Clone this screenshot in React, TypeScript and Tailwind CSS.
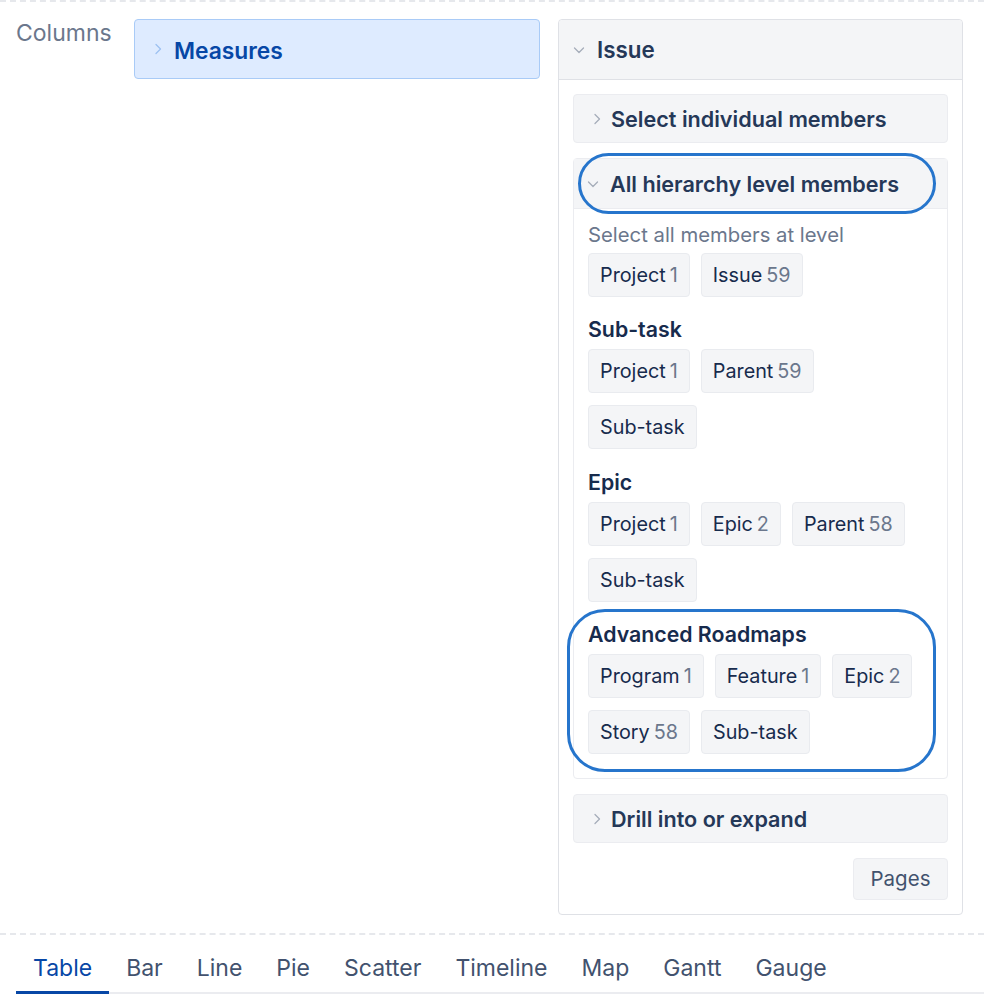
import React from "react";

const Chevron = ({ dir, className }: { dir: "down" | "right"; className?: string }) => (
  <svg width="14" height="14" viewBox="0 0 14 14" className={className}>
    <path
      d={dir === "down" ? "M2.5 5 L7 9.5 L11.5 5" : "M5 2.5 L9.5 7 L5 11.5"}
      fill="none"
      stroke="currentColor"
      strokeWidth="1.3"
      strokeLinecap="round"
      strokeLinejoin="round"
    />
  </svg>
);

const Chip = ({ label, count }: { label: string; count?: number }) => (
  <div className="h-[44px] flex items-center px-[11px] bg-[#f4f5f7] border border-[#e9ebef] rounded-[4px] text-[19.8px] text-[#172b4d] leading-6">
    <span>{label}</span>
    {count !== undefined && <span className="ml-[4px] text-[#6b778c]">{count}</span>}
  </div>
);

const Heading = ({ children }: { children: React.ReactNode }) => (
  <div className="text-[21.3px] font-semibold text-[#172b4d] leading-6">{children}</div>
);

export default function App() {
  const tabs = ["Table", "Bar", "Line", "Pie", "Scatter", "Timeline", "Map", "Gantt", "Gauge"];
  return (
    <div className="min-h-screen bg-white font-['Inter',sans-serif] antialiased">
      <div className="border-t-2 border-dashed border-[#e6e8ec]" />
      <div className="flex pl-4 pt-[17px] items-start">
        <div className="w-[118px] text-[23px] text-[#6b778c] leading-6 pt-[2px]">Columns</div>
        <div className="w-[406px] h-[60px] flex items-center pl-[16px] bg-[#deebff] border border-[#a9cbf7] rounded-[4px]">
          <Chevron dir="right" className="text-[#9dc1f2]" />
          <span className="ml-[9px] mt-[3px] text-[22.8px] font-semibold text-[#0747a6] leading-6">Measures</span>
        </div>
        <div className="ml-[18px] w-[405px] border border-[#dfe1e6] rounded-[4px]">
          <div className="h-[60px] flex items-center pl-[13px] bg-[#f4f5f7] border-b border-[#dfe1e6] rounded-t-[4px]">
            <Chevron dir="down" className="text-[#a5adba]" />
            <span className="ml-[11px] mt-[1px] text-[22.4px] font-semibold text-[#253858] leading-6">Issue</span>
          </div>
          <div className="px-[14px] pt-[14px] pb-[14px] flex flex-col gap-[15px]">
            <div className="h-[49px] flex items-center pl-[16px] bg-[#f4f5f7] border border-[#ebecf0] rounded-[4px]">
              <Chevron dir="right" className="text-[#a5adba]" />
              <span className="ml-[7px] text-[21.6px] font-semibold text-[#253858] leading-6">Select individual members</span>
            </div>
            <div className="relative border border-[#ebecf0] rounded-[4px]">
              <div className="h-[50px] flex items-center pl-[12px] bg-[#f4f5f7] border-b border-[#ebecf0]">
                <Chevron dir="down" className="text-[#a5adba]" />
                <span className="ml-[10px] text-[21.6px] font-semibold text-[#253858] leading-6">All hierarchy level members</span>
              </div>
              <div className="px-[14px] pt-[14px] pb-[24px] flex flex-col">
                <div className="text-[20.3px] text-[#6b778c] leading-6">Select all members at level</div>
                <div className="mt-[6px] flex flex-wrap gap-x-[11px] gap-y-[12px]">
                  <Chip label="Project" count={1} />
                  <Chip label="Issue" count={59} />
                </div>
                <div className="mt-[20px]"><Heading>Sub-task</Heading></div>
                <div className="mt-[8px] flex flex-wrap gap-x-[11px] gap-y-[12px] w-[250px]">
                  <Chip label="Project" count={1} />
                  <Chip label="Parent" count={59} />
                  <Chip label="Sub-task" />
                </div>
                <div className="mt-[21px]"><Heading>Epic</Heading></div>
                <div className="mt-[8px] flex flex-wrap gap-x-[11px] gap-y-[12px] w-[330px]">
                  <Chip label="Project" count={1} />
                  <Chip label="Epic" count={2} />
                  <Chip label="Parent" count={58} />
                  <Chip label="Sub-task" />
                </div>
                <div className="mt-[20px]"><Heading>Advanced Roadmaps</Heading></div>
                <div className="mt-[8px] flex flex-wrap gap-x-[11px] gap-y-[12px] w-[330px]">
                  <Chip label="Program" count={1} />
                  <Chip label="Feature" count={1} />
                  <Chip label="Epic" count={2} />
                  <Chip label="Story" count={58} />
                  <Chip label="Sub-task" />
                </div>
              </div>
              <div className="pointer-events-none absolute left-[4px] top-[-6px] w-[358px] h-[61px] rounded-full border-[3px] border-[#2675cc]" />
              <div className="pointer-events-none absolute left-[-7px] top-[450px] w-[369px] h-[163px] rounded-[38px] border-[3px] border-[#2675cc]" />
            </div>
            <div className="h-[49px] flex items-center pl-[16px] bg-[#f4f5f7] border border-[#ebecf0] rounded-[4px]">
              <Chevron dir="right" className="text-[#a5adba]" />
              <span className="ml-[7px] text-[21.6px] font-semibold text-[#253858] leading-6">Drill into or expand</span>
            </div>
            <div className="flex justify-end">
              <div className="h-[42px] w-[95px] flex items-center justify-center bg-[#f4f5f7] border border-[#ebecf0] rounded-[4px] text-[20.5px] text-[#42526e]">
                Pages
              </div>
            </div>
          </div>
        </div>
      </div>
      <div className="mt-[18px] border-t-2 border-dashed border-[#e6e8ec]" />
      <div className="ml-4 pt-[21px] flex border-b-2 border-[#ebecf0]">
        {tabs.map((t, i) => (
          <div
            key={t}
            className={
              i === 0
                ? "px-[17px] pb-[11px] -mb-[2px] border-b-[3px] border-[#0747a6] text-[23px] leading-6 text-[#0747a6]"
                : "px-[17px] pb-[11px] -mb-[2px] border-b-[3px] border-transparent text-[23px] leading-6 text-[#42526e]"
            }
          >
            {t}
          </div>
        ))}
      </div>
    </div>
  );
}
